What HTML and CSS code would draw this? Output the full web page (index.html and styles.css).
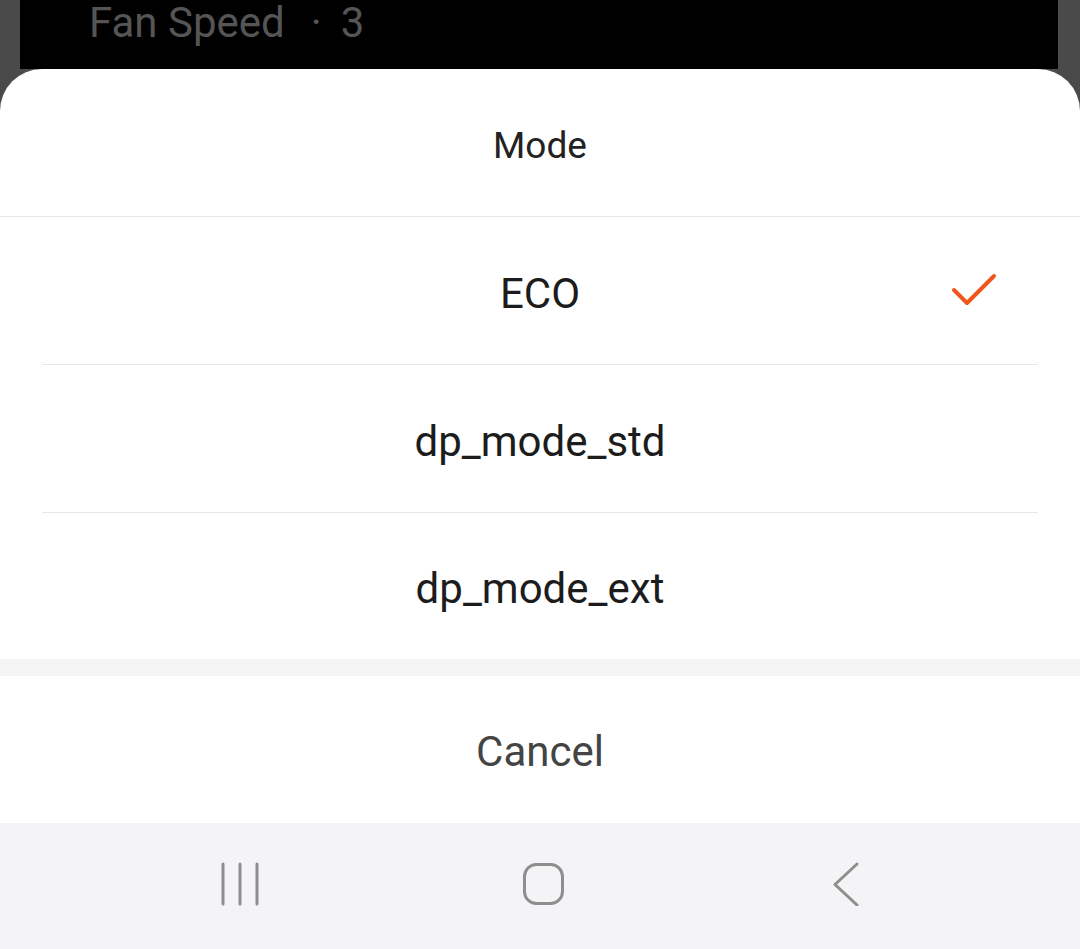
FILE: index.html
```html
<!DOCTYPE html>
<html lang="en">
<head>
  <meta charset="UTF-8">
  <title>Mode</title>
  <meta name="viewport" content="width=device-width, initial-scale=1">
  <link rel="stylesheet" href="styles.css">
</head>
<body>
  <div class="backdrop">
    <div class="backdrop-inner">
      <span class="dim-label">Fan Speed</span>
      <span class="dim-dot">·</span>
      <span class="dim-value">3</span>
    </div>
  </div>

  <div class="sheet">
    <div class="sheet-title">Mode</div>

    <div class="options">
      <div class="option selected">
        <span class="option-label">ECO</span>
        <svg class="check" width="48" height="36" viewBox="0 0 48 36">
          <polyline points="3,17 16,30 43,3" fill="none" stroke="#f0551c" stroke-width="4" stroke-linecap="round" stroke-linejoin="round"/>
        </svg>
      </div>
      <div class="option">
        <span class="option-label">dp_mode_std</span>
      </div>
      <div class="option last">
        <span class="option-label">dp_mode_ext</span>
      </div>
    </div>

    <div class="gap-band"></div>

    <div class="cancel">Cancel</div>

    <!-- system navigation -->
    <div class="navbar">
      <svg class="nav-btn" width="60" height="44" viewBox="0 0 60 44">
        <g stroke="#8e8e8e" stroke-width="3" stroke-linecap="round">
          <line x1="13" y1="2" x2="13" y2="42"/>
          <line x1="30" y1="2" x2="30" y2="42"/>
          <line x1="47" y1="2" x2="47" y2="42"/>
        </g>
      </svg>
      <svg class="nav-btn" width="60" height="44" viewBox="0 0 60 44">
        <rect x="11.5" y="2.5" width="38" height="39" rx="12" fill="none" stroke="#8e8e8e" stroke-width="3"/>
      </svg>
      <svg class="nav-btn" width="60" height="44" viewBox="0 0 60 44">
        <polyline points="41,2 19,22.5 41,43" fill="none" stroke="#8e8e8e" stroke-width="3" stroke-linecap="round" stroke-linejoin="round"/>
      </svg>
    </div>
  </div>
</body>
</html>
```

FILE: styles.css
```css
body {
  margin: 0;
  width: 1080px;
  height: 949px;
  overflow: hidden;
  background: #4a4a4a;
  font-family: Roboto, "Noto Sans", Arial, sans-serif;
  display: flex;
  flex-direction: column;
}

/* dimmed page behind the sheet */
.backdrop {
  height: 69px;
  padding: 0 22px 0 20px;
}
.backdrop-inner {
  height: 100%;
  background: #000;
  display: flex;
  align-items: flex-start;
  gap: 19px;
  padding-left: 69px;
  font-size: 42px;
  line-height: 46px;
  color: #555;
  overflow: hidden;
}
.backdrop-inner .dim-dot { margin-left: 7px; }

.sheet {
  flex: 1;
  background: #fff;
  border-radius: 42px 42px 0 0;
  overflow: hidden;
  display: flex;
  flex-direction: column;
}

.sheet-title {
  height: 147px;
  padding-top: 5px;
  box-sizing: border-box;
  border-bottom: 1px solid #e6e6e6;
  display: flex;
  align-items: center;
  justify-content: center;
  font-size: 37px;
  color: #222;
}
.sheet-title { height: 148px; }

.options { padding: 0 42px; }
.option {
  height: 147px;
  border-bottom: 1px solid #e6e6e6;
  display: grid;
  grid-template-columns: 1fr auto 1fr;
  align-items: center;
  font-size: 42px;
  color: #1c1c1c;
}
.option.last { height: 146px; border-bottom: none; }
.option-label { grid-column: 2; padding-top: 5px; }
.check {
  grid-column: 3;
  justify-self: end;
  margin-right: 39px;
  margin-top: 0;
}

.gap-band {
  height: 17px;
  background: #f5f5f5;
}

.cancel {
  height: 147px;
  padding-top: 4px;
  box-sizing: border-box;
  display: flex;
  align-items: center;
  justify-content: center;
  font-size: 42px;
  color: #444;
}

.navbar {
  height: 126px;
  background: #f4f4f6;
  display: flex;
  align-items: center;
  gap: 243px;
  padding-left: 210px;
}
.nav-btn { display: block; margin-top: -4px; }
```
